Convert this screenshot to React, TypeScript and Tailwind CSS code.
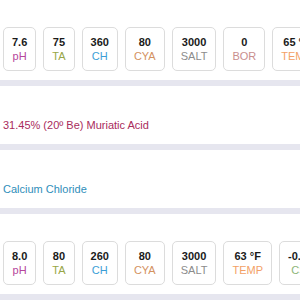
import React from 'react';

interface Reading {
  value: string;
  label: string;
  color: string;
}

const before: Reading[] = [
  { value: '7.6', label: 'pH', color: 'text-[#b5469c]' },
  { value: '75', label: 'TA', color: 'text-[#98a646]' },
  { value: '360', label: 'CH', color: 'text-[#3c9ed6]' },
  { value: '80', label: 'CYA', color: 'text-[#d4925f]' },
  { value: '3000', label: 'SALT', color: 'text-[#8c8c8c]' },
  { value: '0', label: 'BOR', color: 'text-[#c98e8e]' },
  { value: '65 °F', label: 'TEMP', color: 'text-[#f3a166]' },
  { value: '-0.12', label: 'CSI', color: 'text-[#8db578]' },
];

const after: Reading[] = [
  { value: '8.0', label: 'pH', color: 'text-[#b5469c]' },
  { value: '80', label: 'TA', color: 'text-[#98a646]' },
  { value: '260', label: 'CH', color: 'text-[#3c9ed6]' },
  { value: '80', label: 'CYA', color: 'text-[#d4925f]' },
  { value: '3000', label: 'SALT', color: 'text-[#8c8c8c]' },
  { value: '63 °F', label: 'TEMP', color: 'text-[#f3a166]' },
  { value: '-0.09', label: 'CSI', color: 'text-[#8db578]' },
];

function ReadingRow({ readings }: { readings: Reading[] }) {
  return (
    <div className="bg-white pl-[3px] pt-[27px] pb-[9px] overflow-hidden">
      <div className="flex gap-[7px]">
        {readings.map((r) => (
          <div
            key={r.label}
            className="shrink-0 border border-[#dcdcdc] rounded-[5px] px-[8px] py-[7px] text-center text-[11px]"
          >
            <div className="font-bold text-[#1a1a1a] leading-[14px] whitespace-nowrap">
              {r.value}
            </div>
            <div className={`leading-[14px] ${r.color}`}>{r.label}</div>
          </div>
        ))}
      </div>
    </div>
  );
}

function StepRow({ text, color }: { text: string; color: string }) {
  return (
    <div className="bg-white pl-[3px] pt-[31px] pb-[11px]">
      <p className={`text-[11px] leading-[16px] whitespace-nowrap ${color}`}>{text}</p>
    </div>
  );
}

export default function App() {
  return (
    <div
      className="w-[300px] h-[300px] overflow-hidden bg-[#e6e6ef] flex flex-col gap-[6px]"
      style={{ fontFamily: '"Liberation Sans", Arial, sans-serif' }}
    >
      <ReadingRow readings={before} />
      <StepRow text="31.45% (20º Be) Muriatic Acid" color="text-[#a92b5c]" />
      <StepRow text="Calcium Chloride" color="text-[#2f8eba]" />
      <ReadingRow readings={after} />
    </div>
  );
}
